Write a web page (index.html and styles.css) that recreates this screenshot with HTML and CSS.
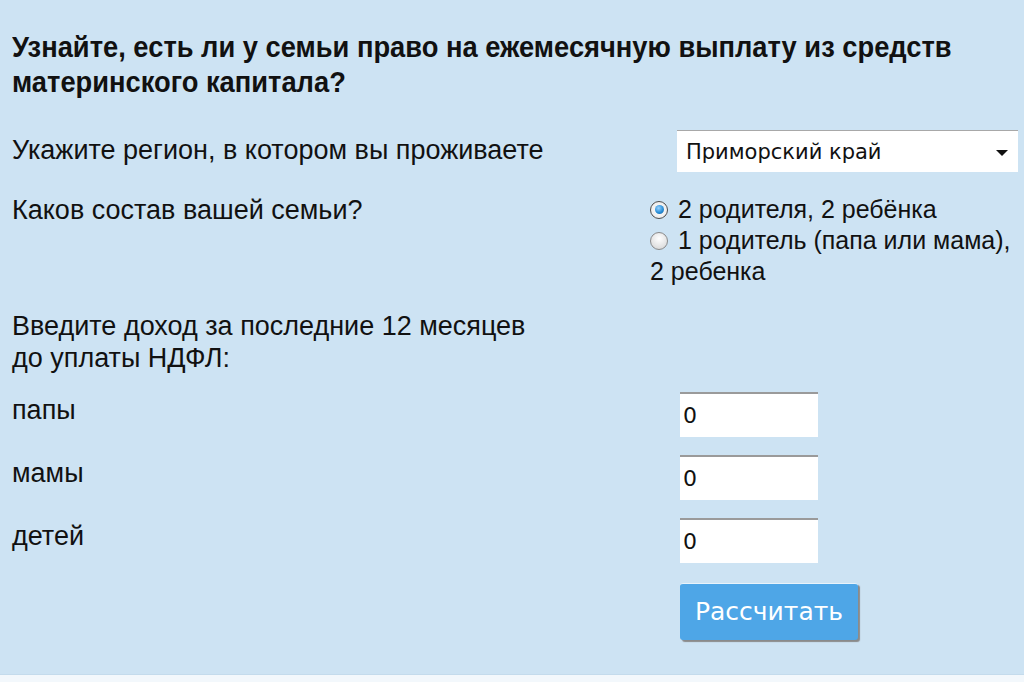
FILE: index.html
```html
<!DOCTYPE html>
<html lang="ru">
<head>
<meta charset="utf-8">
<title>Калькулятор выплаты</title>
<link rel="stylesheet" href="styles.css">
</head>
<body>
<div class="panel">
  <h1 class="title">Узнайте, есть ли у семьи право на ежемесячную выплату из средств материнского капитала?</h1>
  <div class="form">
    <div class="label label-region">Укажите регион, в котором вы проживаете</div>
    <div class="control">
      <div class="select">Приморский край<span class="caret"></span></div>
    </div>

    <div class="label label-family">Каков состав вашей семьи?</div>
    <div class="control radios">
      <div class="radio-line"><span class="radio checked"></span>2 родителя, 2 ребёнка</div>
      <div class="radio-line"><span class="radio"></span>1 родитель (папа или мама),</div>
      <div class="radio-line">2 ребенка</div>
    </div>

    <div class="label label-income">Введите доход за последние 12 месяцев<br>до уплаты НДФЛ:</div>
    <div class="control"></div>

    <div class="label label-field">папы</div>
    <div class="control"><div class="input">0</div></div>

    <div class="label label-field">мамы</div>
    <div class="control"><div class="input">0</div></div>

    <div class="label label-field">детей</div>
    <div class="control"><div class="input">0</div></div>

    <div class="label"></div>
    <div class="control"><div class="button">Рассчитать</div></div>
  </div>
</div>
</body>
</html>
```
FILE: styles.css
```css
html, body {
  margin: 0;
  padding: 0;
  background: #f3f8fc;
}
.panel {
  background: #cde3f3;
  height: 675px;
  border-bottom: 1px solid #c4dbec;
  padding: 0 12px;
  box-sizing: border-box;
  font-family: "Liberation Sans", Arial, sans-serif;
  color: #111;
  overflow: hidden;
}
.title {
  margin: 0;
  padding-top: 29px;
  font-size: 30px;
  line-height: 35px;
  font-weight: bold;
  width: 1100px;
  transform: scaleX(0.91);
  transform-origin: left top;
}
.form {
  display: grid;
  grid-template-columns: 638px 1fr;
  margin-top: 31px;
  font-size: 27px;
  line-height: 32px;
}
.label {
  padding-top: 2px;
}
.label-region { padding-top: 4px; }
.select {
  margin-left: 27px;
  width: 341px;
  height: 42px;
  background: #fff;
  border-top: 1px solid #a8a8a8;
  box-sizing: border-box;
  font-family: "DejaVu Sans", Verdana, sans-serif;
  font-size: 21px;
  line-height: 42px;
  padding-left: 9px;
  position: relative;
  color: #111;
}
.caret {
  position: absolute;
  right: 10px;
  top: 19px;
  width: 0;
  height: 0;
  border-left: 6px solid transparent;
  border-right: 6px solid transparent;
  border-top: 6px solid #111;
}
.label-family { margin-top: 22px; padding-top: 0; }
.radios {
  margin-top: 22px;
  line-height: 31px;
  font-size: 25px;
}
.radio-line {
  display: flex;
  align-items: center;
  height: 31px;
}
.radio {
  width: 18px;
  height: 18px;
  border-radius: 50%;
  border: 1px solid #8a8a8a;
  box-sizing: border-box;
  margin-right: 10px;
  background: radial-gradient(circle at 50% 35%, #ffffff 0%, #e4e4e4 60%, #cfcfcf 100%);
  display: flex;
  align-items: center;
  justify-content: center;
}
.radio.checked {
  border-color: #4d4d4d;
  background: radial-gradient(circle, #ffffff 0%, #e6e6e6 100%);
}
.radio.checked::after {
  content: "";
  width: 9px;
  height: 9px;
  border-radius: 50%;
  background: radial-gradient(circle at 40% 35%, #9ad3ff 0%, #2a8fd8 55%, #155e99 100%);
}
.label-income { margin-top: 23px; padding-top: 0; }
.label-field {
  margin-top: 18px;
  padding-top: 2px;
}
.input {
  margin-top: 18px;
  margin-left: 30px;
  width: 138px;
  height: 45px;
  background: #fff;
  border-top: 2px solid #9a9a9a;
  box-sizing: border-box;
  font-family: "DejaVu Sans", Verdana, sans-serif;
  font-size: 22px;
  line-height: 43px;
  padding-left: 3px;
  color: #111;
}
.button {
  margin-top: 20px;
  margin-left: 30px;
  width: 178px;
  height: 57px;
  background: #4ea6e7;
  border-top: 1px solid #e8f3fb;
  border-radius: 3px;
  box-shadow: 2px 2px 1px #8a8a8a;
  box-sizing: border-box;
  color: #fff;
  font-family: "DejaVu Sans", Verdana, sans-serif;
  font-size: 25px;
  line-height: 55px;
  text-align: center;
}
```
